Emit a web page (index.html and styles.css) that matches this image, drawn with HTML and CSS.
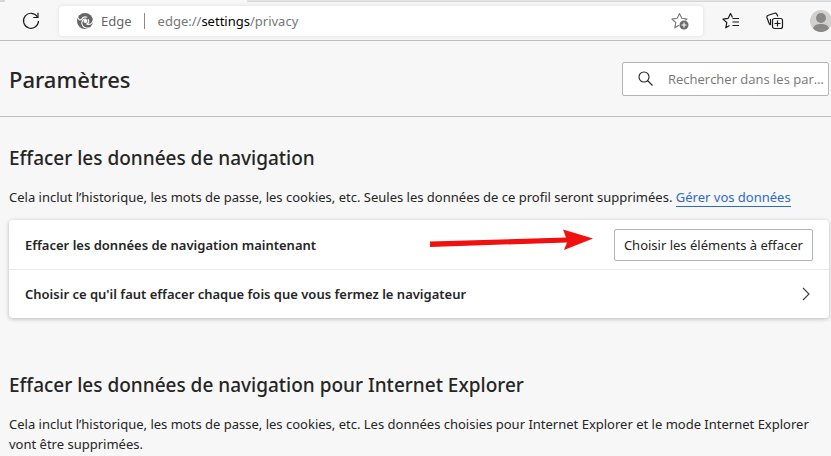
FILE: index.html
```html
<!DOCTYPE html>
<html lang="fr">
<head>
    <meta charset="UTF-8">
    <meta name="viewport" content="width=device-width, initial-scale=1.0">
    <title>Paramètres</title>
    <link rel="stylesheet" href="styles.css">
</head>
<body>

    <div class="tabstrip">
        <div class="tab-left"></div>
        <div class="tab-active"></div>
        <div class="tab-rest"></div>
    </div>

    <nav class="toolbar">
        <button type="button" class="icon-btn" aria-label="Actualiser">
            <svg width="18" height="18" viewBox="0 0 18 18" fill="none" stroke="#1b1b1b" stroke-width="1.2">
                <path d="M15.5 5A7.5 7.5 0 1 0 16.5 9"/>
                <path d="M16 .8v4.700h-4.700"/>
            </svg>
        </button>

        <div class="address">
            <svg width="18" height="18" viewBox="0 0 18 18">
                <circle cx="9" cy="9" r="8" fill="#666"/>
                <g fill="none" stroke="#fff" stroke-width="1.1" stroke-linecap="round">
                    <path d="M1.500 4C1.800 7.500 4 8.500 5.500 7.500 6.500 5.200 8.500 4.500 10.800 5.200"/>
                    <path d="M13.500 16C9.500 16.500 6 14.800 5.800 11.300 5.700 8.500 7.500 6.800 9.500 7"/>
                    <path d="M17 8.500C16.500 12 13 13 10.800 11.900 12.500 11 13.200 9.300 12.300 7.500"/>
                </g>
                <circle cx="9.500" cy="9" r="2" fill="#fff"/>
            </svg>
            <span class="address-name">Edge</span>
            <span class="address-url">edge://<b>settings</b>/privacy</span>
            <button type="button" class="icon-btn" aria-label="Ajouter aux favoris">
                <svg width="18" height="18" viewBox="0 0 18 18" fill="none" stroke="#777" stroke-width="1.1">
                    <path d="M8 13.200 3.800 15.800 4.800 10.500.9 7.100 6.200 6.300 8.500 1.500 10.800 6.300 16 7.100 14.500 8.400" stroke-linejoin="round"/>
                    <circle cx="13" cy="13" r="4.500" fill="#6b6b6b" stroke="none"/>
                    <path d="M13 10.500v5M10.500 13h5" stroke="#fff"/>
                </svg>
            </button>
        </div>

        <div class="tools">
            <button type="button" class="icon-btn" aria-label="Favoris">
                <svg width="18" height="18" viewBox="0 0 18 18" fill="none" stroke="#1b1b1b" stroke-width="1.2">
                    <path d="M7.500 13.500 3.800 15.800 4.800 10.500.9 7.100 6.200 6.300 8.500 1.500 10.500 5.500" stroke-linejoin="round"/>
                    <path d="M10.500 6.500H17M10.500 10H17M10.500 13.500H17"/>
                </svg>
            </button>
            <button type="button" class="icon-btn" aria-label="Collections">
                <svg width="18" height="18" viewBox="0 0 18 18" fill="none" stroke="#1b1b1b" stroke-width="1.2">
                    <rect x="6.500" y="6.500" width="10" height="10" rx="2"/>
                    <path d="M11.500 8.500v6M8.500 11.500h6"/>
                    <path d="M4.500 13 3.300 12 1 5.800a2 2 0 0 1 1.300-2.500L8.500 1.300a2 2 0 0 1 2.500 1.300l.8 1.900M4.500 13V7"/>
                </svg>
            </button>
            <button type="button" class="icon-btn" aria-label="Profil">
                <svg width="22" height="22" viewBox="0 0 22 22">
                    <circle cx="11" cy="11" r="11" fill="#d2d0ce"/>
                    <circle cx="11" cy="8" r="5" fill="#8a8886"/>
                    <path d="M3 18.500c1-3.500 4-4.500 8-4.500s7 1 8 4.500a11 11 0 0 1-16 0z" fill="#8a8886"/>
                </svg>
            </button>
        </div>
    </nav>

    <header class="header">
        <h1>Paramètres</h1>
        <label class="search">
            <svg width="16" height="16" viewBox="0 0 16 16" fill="none" stroke="#222" stroke-width="1.1">
                <circle cx="6" cy="6" r="5"/>
                <path d="M9.500 9.500l5 5"/>
            </svg>
            <input type="text" placeholder="Rechercher dans les paramètres" aria-label="Rechercher dans les paramètres">
        </label>
    </header>

    <main class="content">
        <section>
            <h2>Effacer les données de navigation</h2>
            <p>Cela inclut l’historique, les mots de passe, les cookies, etc. Seules les données de ce profil seront supprimées. <a href="#">Gérer vos données</a></p>

            <div class="card">
                <div class="row">
                    <span class="row-title">Effacer les données de navigation maintenant</span>
                    <svg class="arrow" width="164" height="22" viewBox="0 0 164 22">
                        <path d="M0 12.500 136 8.500 133 .5 163 9.500 134 21 137 13.500 0 18z" fill="#f01010"/>
                    </svg>
                    <button type="button" class="btn">Choisir les éléments à effacer</button>
                </div>
                <a class="row" href="#">
                    <span class="row-title">Choisir ce qu'il faut effacer chaque fois que vous fermez le navigateur</span>
                    <svg class="chevron" width="8" height="14" viewBox="0 0 8 14" fill="none" stroke="#444" stroke-width="1.2">
                        <path d="M1 1l6 6-6 6"/>
                    </svg>
                </a>
            </div>
        </section>

        <section>
            <h2>Effacer les données de navigation pour Internet Explorer</h2>
            <p>Cela inclut l’historique, les mots de passe, les cookies, etc. Les données choisies pour Internet Explorer et le mode Internet Explorer vont être supprimées.</p>
        </section>
    </main>

</body>
</html>
```
FILE: styles.css
```css
* {
    box-sizing: border-box;
}

body {
    margin: 0;
    font-family: "Noto Sans", "Open Sans", sans-serif;
    font-size: 13px;
    line-height: 20px;
    color: #252525;
    background-color: #f7f7f7;
}

button {
    font: inherit;
    color: inherit;
    cursor: pointer;
}

svg {
    display: block;
    flex: none;
}

/* Bas de la barre d'onglets */
.tabstrip {
    display: flex;
    height: 2px;
}

.tab-left {
    width: 5px;
    background-color: #d6d6d6;
}

.tab-active {
    width: 242px;
}

.tab-rest {
    flex: 1;
    background-color: #e4e4e4;
    border-bottom: 1px solid #d6d6d6;
}

.toolbar {
    display: flex;
    align-items: center;
    height: 39px;
    padding-left: 22px;
    border-bottom: 1px solid #bdbdbd;
}

.icon-btn {
    flex: none;
    padding: 0;
    border: none;
    background: none;
}

.address {
    display: flex;
    flex: 1;
    align-items: center;
    height: 30px;
    margin-left: 19px;
    padding: 0 14px 0 17px;
    border-radius: 4px;
    background-color: #fff;
    box-shadow: 0 0 4px rgba(0, 0, 0, 0.1);
    color: #767676;
}

.address-name {
    margin-left: 7px;
    padding-right: 12px;
    border-right: 1px solid #8a8a8a;
    line-height: 16px;
    color: #666;
}

.address-url {
    flex: 1;
    margin-left: 13px;
}

.address-url b {
    font-weight: normal;
    color: #000;
}

.tools {
    display: flex;
    align-items: center;
    gap: 26px;
    margin-left: 19px;
    margin-right: -1px;
}

.header {
    display: flex;
    align-items: center;
    justify-content: space-between;
    height: 76px;
    padding: 0 2px 0 9px;
    border-bottom: 1px solid #bdbdbd;
}

h1 {
    margin: 0;
    font-size: 22px;
    font-weight: 500;
    line-height: 32px;
}

.search {
    display: flex;
    align-items: center;
    width: 207px;
    height: 34px;
    padding-left: 15px;
    border: 1px solid #b5b5b5;
    border-radius: 2px;
    background-color: #fff;
}

.search input {
    flex: 1;
    min-width: 0;
    margin-left: 14px;
    padding: 0 4px 0 0;
    border: none;
    outline: none;
    background: none;
    font-family: "Open Sans", "Noto Sans", sans-serif;
    font-size: 13px;
    text-overflow: ellipsis;
}

.search input::placeholder {
    color: #767676;
}

.content {
    padding: 27px 2px 0 9px;
}

section + section {
    margin-top: 53px;
}

h2 {
    margin: 0;
    font-size: 19px;
    font-weight: 500;
    line-height: 28px;
}

p {
    margin: 15px 0 0;
}

a {
    color: #2b6cc9;
    text-decoration: none;
}

p a {
    border-bottom: 1px solid #2b6cc9;
}

.card {
    margin-top: 13px;
    border-radius: 4px;
    background-color: #fff;
    box-shadow: 0 1px 4px rgba(0, 0, 0, 0.25);
}

.row {
    display: flex;
    align-items: center;
    height: 49px;
    padding: 0 16px;
    color: #252525;
}

.row + .row {
    border-top: 1px solid #e8e8e8;
}

.row-title {
    flex: 1;
    font-weight: 600;
}

.arrow {
    margin: 0 20px 10px 0;
}

.btn {
    height: 32px;
    padding: 0 9px;
    border: 1px solid #b5b5b5;
    border-radius: 2px;
    background-color: #fff;
}

.chevron {
    margin-right: 3px;
}
```
